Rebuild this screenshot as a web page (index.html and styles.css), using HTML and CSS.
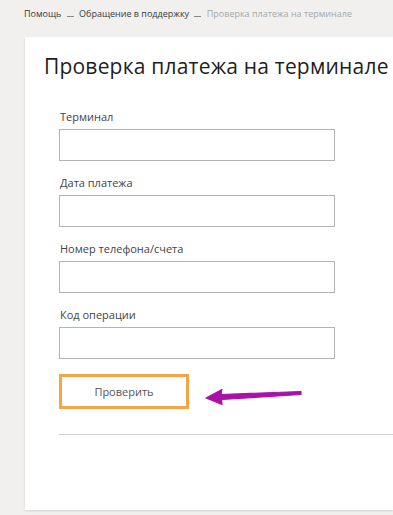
FILE: index.html
```html
<!DOCTYPE html>
<html lang="ru">
<head>
    <meta charset="UTF-8">
    <meta name="viewport" content="width=device-width, initial-scale=1.0">
    <title>Проверка платежа на терминале</title>
    <link rel="stylesheet" href="styles.css">
</head>
<body>
    <div class="breadcrumbs">
        <a href="#" class="crumb">Помощь</a>
        <span class="crumb-sep"></span>
        <a href="#" class="crumb">Обращение в поддержку</a>
        <span class="crumb-sep"></span>
        <span class="crumb crumb-current">Проверка платежа на терминале</span>
    </div>

    <div class="card">
        <h1 class="page-title">Проверка платежа на терминале</h1>

        <form class="check-form">
            <div class="field">
                <label for="terminal" class="field-label">Терминал</label>
                <input type="text" id="terminal" class="field-input">
            </div>
            <div class="field">
                <label for="pay-date" class="field-label">Дата платежа</label>
                <input type="text" id="pay-date" class="field-input">
            </div>
            <div class="field">
                <label for="account" class="field-label">Номер телефона/счета</label>
                <input type="text" id="account" class="field-input">
            </div>
            <div class="field">
                <label for="op-code" class="field-label">Код операции</label>
                <input type="text" id="op-code" class="field-input">
            </div>

            <div class="submit-row">
                <button type="button" class="check-button">Проверить</button>
                <!-- annotation arrow drawn over the page -->
                <svg class="hint-arrow" width="100" height="18" viewBox="0 0 100 18">
                    <path d="M96 3.5 L16 6.5 L17 1.5 L1 10 L17 16.5 L16.5 11.5 L96 6.5 Z" fill="#a812a8" stroke="#a812a8" stroke-width="1.2" stroke-linejoin="round"/>
                </svg>
            </div>

            <div class="divider"></div>
        </form>
    </div>
</body>
</html>
```

FILE: styles.css
```css
body {
    margin: 0;
    height: 515px;
    overflow: hidden;
    background: #f1f0ee;
    font-family: "Open Sans", Arial, sans-serif;
    color: #333;
}

.breadcrumbs {
    padding: 7px 0 0 24px;
    font-size: 9px;
    line-height: 14px;
    white-space: nowrap;
}
.crumb {
    color: #3a3a3a;
    text-decoration: none;
}
.crumb-current {
    color: #a8a8a8;
}
.crumb-sep {
    display: inline-block;
    width: 7px;
    height: 1px;
    margin: 0 3px;
    background: #888;
    vertical-align: baseline;
}

.card {
    margin: 16px 0 0 25px;
    height: 473px;
    background: #fff;
    box-shadow: 0 1px 2px rgba(0, 0, 0, 0.12);
    padding-top: 14px;
    box-sizing: border-box;
}

.page-title {
    margin: 0 0 29px 19px;
    font-size: 21px;
    line-height: 30px;
    font-weight: 400;
    letter-spacing: 0.2px;
    color: #1e1e1e;
    white-space: nowrap;
}

.check-form {
    padding-left: 34px;
}
.field {
    margin-bottom: 15px;
}
.field-label {
    display: block;
    font-size: 11px;
    line-height: 14px;
    color: #444;
    margin-bottom: 5px;
    padding-left: 1px;
}
.field-input {
    display: block;
    width: 276px;
    height: 32px;
    box-sizing: border-box;
    border: 1px solid #b4b4b4;
    background: #fff;
    margin: 0;
}

.submit-row {
    position: relative;
}
.check-button {
    width: 130px;
    height: 35px;
    border: 3px solid #f4a647;
    background: #fff;
    font-family: "Open Sans", Arial, sans-serif;
    font-size: 11px;
    color: #555;
    cursor: pointer;
}
.hint-arrow {
    position: absolute;
    left: 146px;
    top: 14px;
}

.divider {
    margin-top: 25px;
    height: 1px;
    background: #cfcfcf;
}
```
